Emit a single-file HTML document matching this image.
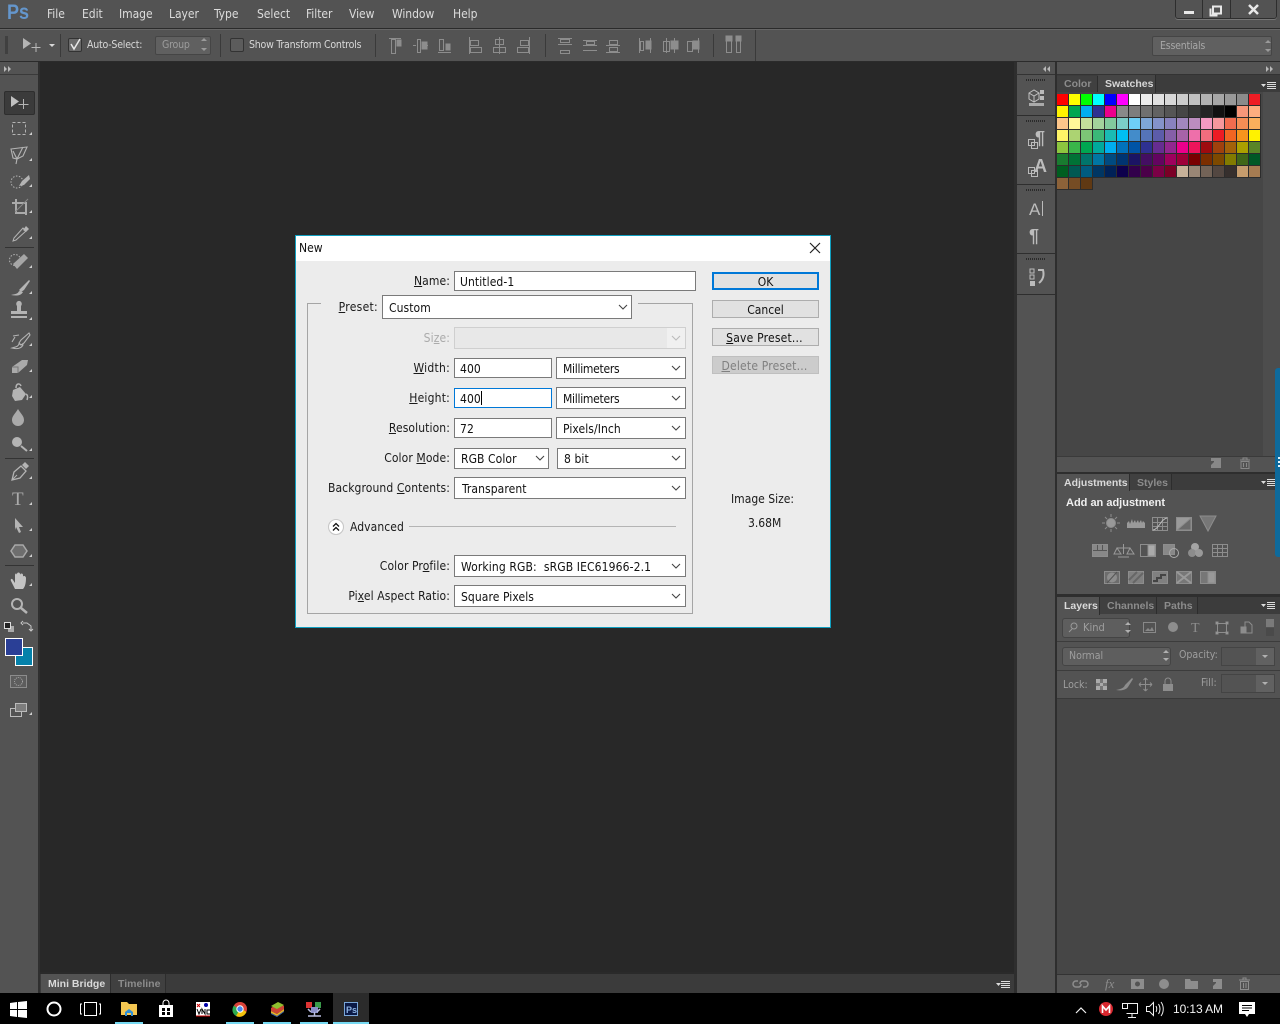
<!DOCTYPE html>
<html><head><meta charset="utf-8"><title>Photoshop - New</title>
<style>
html,body{margin:0;padding:0;width:1280px;height:1024px;overflow:hidden;background:#282828}
body{position:relative;font-family:"DejaVu Sans Condensed","Liberation Sans",sans-serif;font-size:12px}
div,span.t{position:absolute;box-sizing:border-box}
.t{white-space:nowrap;line-height:14px;height:14px}
.m{color:#dcdcdc;top:7px;font-size:12px;letter-spacing:-.05px}
.o{color:#d8d8d8;font-size:10.5px;letter-spacing:-.22px}
.p{font-family:"Liberation Sans",sans-serif;font-size:10.5px;color:#9c9c9c;font-weight:bold;letter-spacing:0}
.pa{color:#dadada}
.l{color:#1a1a1a;right:830px;letter-spacing:.1px}
.f{background:#fff;border:1px solid #7a7a7a;color:#111;padding-left:5px;line-height:20px;letter-spacing:.08px}
.b{background:#e1e1e1;border:1px solid #adadad;color:#111;text-align:center;left:712px;width:107px;height:18px;line-height:18px}
.mm{letter-spacing:-.28px}
u{text-decoration:underline}
#sw{left:1057px;top:94px;width:204px;display:grid;grid-template-columns:repeat(17,12px);grid-auto-rows:12px;background:#2c2c2c}
#sw i{display:block;width:11px;height:11px;margin:0 1px 1px 0}
#sw2{left:1057px;top:178px;display:grid;grid-template-columns:repeat(3,12px);grid-auto-rows:12px;background:#2c2c2c}
#sw2 i{display:block;width:11px;height:11px;margin:0 1px 1px 0}
svg{position:absolute;left:0;top:0;pointer-events:none}
</style></head><body>

<!-- title + options -->
<div style="left:0;top:0;width:1280px;height:28px;background:#535353"></div>
<div style="left:0;top:28px;width:1280px;height:1px;background:#2b2b2b"></div>
<div style="left:0;top:29px;width:1280px;height:33px;background:#535353;border-top:1px solid #666"></div>
<div style="left:0;top:61px;width:1280px;height:1px;background:#2b2b2b"></div>

<span class="t" style="left:7px;top:2px;height:22px;line-height:22px;font-family:'Liberation Sans',sans-serif;font-size:21px;font-weight:bold;color:#6496cc;transform:scaleX(.86);transform-origin:0 0">Ps</span>
<span class="t m" style="left:47px">File</span>
<span class="t m" style="left:82px">Edit</span>
<span class="t m" style="left:119px">Image</span>
<span class="t m" style="left:169px">Layer</span>
<span class="t m" style="left:214px">Type</span>
<span class="t m" style="left:257px">Select</span>
<span class="t m" style="left:306px">Filter</span>
<span class="t m" style="left:349px">View</span>
<span class="t m" style="left:392px">Window</span>
<span class="t m" style="left:453px">Help</span>

<div style="left:1175px;top:0;width:102px;height:19px;background:#535353;border:1px solid #2e2e2e;border-top:0;border-radius:0 0 3px 3px;box-shadow:0 1px 0 #777"></div>

<div style="left:68px;top:38px;width:14px;height:14px;background:#6a6a6a;border:1px solid #333;border-radius:2px"></div>
<span class="t o" style="left:87px;top:38px">Auto-Select:</span>
<div style="left:155px;top:36px;width:56px;height:19px;background:#606060;border:1px solid #454545;border-radius:2px"></div>
<span class="t o" style="left:162px;top:38px;color:#9c9c9c">Group</span>
<div style="left:230px;top:38px;width:14px;height:14px;background:#5c5c5c;border:1px solid #333;border-radius:2px"></div>
<span class="t o" style="left:249px;top:38px">Show Transform Controls</span>
<div style="left:1152px;top:36px;width:120px;height:20px;background:#606060;border:1px solid #454545;border-radius:2px"></div>
<span class="t o" style="left:1160px;top:39px;color:#a8a8a8">Essentials</span>

<!-- left toolbar -->
<div style="left:0;top:62px;width:38px;height:931px;background:#535353"></div>
<div style="left:38px;top:62px;width:2px;height:931px;background:#2f2f2f"></div>
<div style="left:0;top:74px;width:38px;height:1px;background:#3a3a3a"></div>
<div style="left:4px;top:91px;width:31px;height:24px;background:#3b3b3b;border:1px solid #2e2e2e;border-radius:2px"></div>

<!-- bottom dock -->
<div style="left:40px;top:972px;width:976px;height:21px;background:#3b3b3b;border-top:2px solid #2a2a2a"></div>
<div style="left:41px;top:974px;width:69px;height:19px;background:#535353"></div>
<div style="left:110px;top:974px;width:56px;height:19px;background:#404040;border-left:1px solid #2d2d2d;border-right:1px solid #2d2d2d"></div>
<span class="t p pa" style="left:48px;top:977px">Mini Bridge</span>
<span class="t p" style="left:118px;top:977px;color:#8c8c8c">Timeline</span>

<!-- right dock -->
<div style="left:1016px;top:62px;width:264px;height:931px;background:#535353"></div>
<div style="left:1016px;top:62px;width:1px;height:931px;background:#2e2e2e"></div>
<div style="left:1014px;top:62px;width:2px;height:931px;background:#2e2e2e"></div>
<div style="left:1016px;top:74px;width:264px;height:1px;background:#333"></div>
<div style="left:1055px;top:62px;width:2px;height:931px;background:#2e2e2e"></div>
<div style="left:1017px;top:115px;width:38px;height:1px;background:#2e2e2e"></div>
<div style="left:1017px;top:184px;width:38px;height:1px;background:#2e2e2e"></div>
<div style="left:1017px;top:253px;width:38px;height:1px;background:#2e2e2e"></div>
<div style="left:1017px;top:294px;width:38px;height:1px;background:#2e2e2e"></div>

<!-- swatches panel -->
<div style="left:1057px;top:75px;width:219px;height:381px;background:#464646"></div>
<div style="left:1263px;top:92px;width:17px;height:364px;background:#4d4d4d"></div>
<div style="left:1057px;top:75px;width:223px;height:17px;background:#3c3c3c"></div>
<div style="left:1057px;top:76px;width:41px;height:16px;background:#404040;border-right:1px solid #2d2d2d"></div>
<div style="left:1098px;top:75px;width:58px;height:18px;background:#464646;border-right:1px solid #2d2d2d"></div>
<span class="t p" style="left:1064px;top:77px;color:#8c8c8c">Color</span>
<span class="t p" style="left:1105px;top:77px;color:#d8d8d8">Swatches</span>
<div id="sw"><i style="background:#ff0000"></i><i style="background:#ffff00"></i><i style="background:#00ff00"></i><i style="background:#00ffff"></i><i style="background:#0000ff"></i><i style="background:#ff00ff"></i><i style="background:#ffffff"></i><i style="background:#ebebeb"></i><i style="background:#e1e1e1"></i><i style="background:#d7d7d7"></i><i style="background:#cbcbcb"></i><i style="background:#c0c0c0"></i><i style="background:#b2b2b2"></i><i style="background:#a6a6a6"></i><i style="background:#999999"></i><i style="background:#8b8b8b"></i><i style="background:#ed1c24"></i>
<i style="background:#fff200"></i><i style="background:#00a651"></i><i style="background:#00aeef"></i><i style="background:#2e3192"></i><i style="background:#ec008c"></i><i style="background:#898989"></i><i style="background:#7d7d7d"></i><i style="background:#707070"></i><i style="background:#626262"></i><i style="background:#555555"></i><i style="background:#464646"></i><i style="background:#363636"></i><i style="background:#252525"></i><i style="background:#111111"></i><i style="background:#000000"></i><i style="background:#f7977a"></i><i style="background:#fdad7f"></i>
<i style="background:#fdc68a"></i><i style="background:#fff799"></i><i style="background:#c4df9b"></i><i style="background:#a3d39c"></i><i style="background:#82ca9d"></i><i style="background:#7bcdc8"></i><i style="background:#6ecff6"></i><i style="background:#7ea7d8"></i><i style="background:#8493ca"></i><i style="background:#8882be"></i><i style="background:#a187be"></i><i style="background:#bc8dbf"></i><i style="background:#f49ac2"></i><i style="background:#f6989d"></i><i style="background:#f26c4f"></i><i style="background:#f68e55"></i><i style="background:#fbaf5c"></i>
<i style="background:#fff467"></i><i style="background:#acd372"></i><i style="background:#7cc576"></i><i style="background:#3bb878"></i><i style="background:#1abbb4"></i><i style="background:#00bff3"></i><i style="background:#438cca"></i><i style="background:#5574b9"></i><i style="background:#5c5caa"></i><i style="background:#855fa8"></i><i style="background:#a763a8"></i><i style="background:#ee6faa"></i><i style="background:#f26d7e"></i><i style="background:#ed1c24"></i><i style="background:#f26522"></i><i style="background:#f7941d"></i><i style="background:#fff200"></i>
<i style="background:#8dc63f"></i><i style="background:#39b54a"></i><i style="background:#00a651"></i><i style="background:#00a99d"></i><i style="background:#00aeef"></i><i style="background:#0072bc"></i><i style="background:#0054a6"></i><i style="background:#2e3192"></i><i style="background:#662d91"></i><i style="background:#92278f"></i><i style="background:#ec008c"></i><i style="background:#ed145b"></i><i style="background:#9e0b0f"></i><i style="background:#a0410d"></i><i style="background:#a36209"></i><i style="background:#aba000"></i><i style="background:#598527"></i>
<i style="background:#197b30"></i><i style="background:#007236"></i><i style="background:#00746b"></i><i style="background:#0076a3"></i><i style="background:#004a80"></i><i style="background:#003471"></i><i style="background:#1b1464"></i><i style="background:#440e62"></i><i style="background:#630460"></i><i style="background:#9e005d"></i><i style="background:#9e0039"></i><i style="background:#790000"></i><i style="background:#7b2e00"></i><i style="background:#7d4900"></i><i style="background:#827b00"></i><i style="background:#406618"></i><i style="background:#005826"></i>
<i style="background:#005e20"></i><i style="background:#005952"></i><i style="background:#005b7f"></i><i style="background:#003663"></i><i style="background:#002157"></i><i style="background:#0d004c"></i><i style="background:#32004b"></i><i style="background:#4b0049"></i><i style="background:#7b0046"></i><i style="background:#7a0026"></i><i style="background:#c7b299"></i><i style="background:#998675"></i><i style="background:#736357"></i><i style="background:#534741"></i><i style="background:#362f2d"></i><i style="background:#c69c6d"></i><i style="background:#a67c52"></i></div>
<div id="sw2"><i style="background:#8c6239"></i><i style="background:#754c24"></i><i style="background:#603913"></i></div>

<div style="left:1057px;top:456px;width:223px;height:16px;background:#535353;border-top:1px solid #3a3a3a"></div>
<div style="left:1275px;top:368px;width:5px;height:189px;background:#0e6a9c;border-radius:3px 0 0 3px;z-index:2"></div>
<div style="left:1278px;top:457px;width:2px;height:2px;background:#e8f4fa;z-index:3"></div>
<div style="left:1278px;top:461px;width:2px;height:2px;background:#e8f4fa;z-index:3"></div>
<div style="left:1278px;top:465px;width:2px;height:2px;background:#e8f4fa;z-index:3"></div>

<!-- adjustments -->
<div style="left:1057px;top:472px;width:218px;height:2px;background:#2e2e2e"></div>
<div style="left:1057px;top:474px;width:218px;height:16px;background:#3c3c3c"></div>
<div style="left:1057px;top:474px;width:73px;height:17px;background:#535353;border-right:1px solid #2d2d2d"></div>
<div style="left:1130px;top:474px;width:42px;height:16px;background:#404040;border-right:1px solid #2d2d2d"></div>
<span class="t p pa" style="left:1064px;top:476px">Adjustments</span>
<span class="t p" style="left:1137px;top:476px;color:#8c8c8c">Styles</span>
<span class="t" style="left:1066px;top:496px;font-family:'Liberation Sans',sans-serif;font-size:11px;font-weight:bold;color:#f0f0f0">Add an adjustment</span>
<div style="left:1057px;top:594px;width:223px;height:3px;background:#2e2e2e"></div>

<!-- layers -->
<div style="left:1057px;top:597px;width:223px;height:17px;background:#3c3c3c"></div>
<div style="left:1057px;top:597px;width:43px;height:18px;background:#535353;border-right:1px solid #2d2d2d"></div>
<div style="left:1100px;top:597px;width:57px;height:17px;background:#404040;border-right:1px solid #2d2d2d"></div>
<div style="left:1157px;top:597px;width:41px;height:17px;background:#404040;border-right:1px solid #2d2d2d"></div>
<span class="t p pa" style="left:1064px;top:599px">Layers</span>
<span class="t p" style="left:1107px;top:599px;color:#8c8c8c">Channels</span>
<span class="t p" style="left:1164px;top:599px;color:#8c8c8c">Paths</span>
<div style="left:1057px;top:641px;width:223px;height:1px;background:#3c3c3c"></div>
<div style="left:1057px;top:670px;width:223px;height:1px;background:#3c3c3c"></div>
<div style="left:1057px;top:698px;width:223px;height:276px;background:#464646;border-top:1px solid #3a3a3a"></div>
<div style="left:1057px;top:974px;width:223px;height:19px;background:#535353;border-top:1px solid #333"></div>
<div style="left:1062px;top:618px;width:68px;height:20px;background:#5e5e5e;border:1px solid #444;border-radius:3px"></div>
<span class="t" style="left:1083px;top:621px;font-size:11px;color:#9e9e9e">Kind</span>
<div style="left:1062px;top:647px;width:109px;height:19px;background:#5e5e5e;border:1px solid #444;border-radius:3px"></div>
<span class="t" style="left:1069px;top:649px;font-size:10.5px;color:#9e9e9e">Normal</span>
<span class="t" style="left:1179px;top:648px;font-size:10.5px;color:#9e9e9e">Opacity:</span>
<div style="left:1221px;top:647px;width:54px;height:19px;background:#535353;border:1px solid #444"></div>
<div style="left:1256px;top:648px;width:18px;height:17px;background:#616161"></div>
<span class="t" style="left:1063px;top:678px;font-size:10.5px;color:#9e9e9e">Lock:</span>
<span class="t" style="left:1201px;top:676px;font-size:10.5px;color:#9e9e9e">Fill:</span>
<div style="left:1221px;top:674px;width:54px;height:19px;background:#535353;border:1px solid #444"></div>
<div style="left:1256px;top:675px;width:18px;height:17px;background:#616161"></div>

<!-- taskbar -->
<div style="left:0;top:993px;width:1280px;height:31px;background:#000"></div>
<div style="left:333px;top:993px;width:36px;height:31px;background:#2b2b2b"></div>
<div style="left:115px;top:1022px;width:28px;height:2px;background:#76d9f2"></div>
<div style="left:226px;top:1022px;width:28px;height:2px;background:#76d9f2"></div>
<div style="left:263px;top:1022px;width:28px;height:2px;background:#76d9f2"></div>
<div style="left:300px;top:1022px;width:28px;height:2px;background:#76d9f2"></div>
<div style="left:333px;top:1022px;width:36px;height:2px;background:#76d9f2"></div>
<span class="t" style="left:1173px;top:1002px;font-family:'Liberation Sans',sans-serif;font-size:12px;letter-spacing:-.1px;color:#f4f4f4">10:13 AM</span>

<!-- dialog -->
<div style="left:295px;top:235px;width:536px;height:393px;background:#ececec;border:1px solid #0f9fc0"></div>
<div style="left:296px;top:236px;width:534px;height:25px;background:#fff"></div>
<span class="t" style="left:299px;top:241px;color:#111">New</span>

<!-- group box -->
<div style="left:307px;top:303px;width:1px;height:310px;background:#a5a5a5"></div>
<div style="left:307px;top:303px;width:14px;height:1px;background:#a5a5a5"></div>
<div style="left:638px;top:303px;width:55px;height:1px;background:#a5a5a5"></div>
<div style="left:692px;top:303px;width:1px;height:311px;background:#a5a5a5"></div>
<div style="left:307px;top:613px;width:386px;height:1px;background:#a5a5a5"></div>

<span class="t l" style="top:274px"><u>N</u>ame:</span>
<div class="f" style="left:454px;top:271px;width:242px;height:20px">Untitled-1</div>
<span class="t l" style="top:300px;right:902px;letter-spacing:.3px"><u>P</u>reset:</span>
<div class="f" style="left:382px;top:295px;width:250px;height:24px;padding-left:6px;line-height:24px">Custom</div>
<span class="t l" style="top:331px;color:#ababab">Si<u>z</u>e:</span>
<div style="left:454px;top:327px;width:232px;height:22px;background:#f0f0f0;border:1px solid #cfcfcf"></div>
<div style="left:455px;top:328px;width:212px;height:20px;background:#e8e8e8"></div>

<span class="t l" style="top:361px;letter-spacing:.25px"><u>W</u>idth:</span>
<div class="f" style="left:454px;top:358px;width:98px;height:20px">400</div>
<div class="f mm" style="left:556px;top:357px;width:130px;height:22px;padding-left:6px;line-height:22px">Millimeters</div>
<span class="t l" style="top:391px;letter-spacing:.2px"><u>H</u>eight:</span>
<div class="f" style="left:454px;top:388px;width:98px;height:20px;border-color:#0078d7">400</div>
<div style="left:481px;top:391px;width:1px;height:14px;background:#000"></div>
<div class="f mm" style="left:556px;top:387px;width:130px;height:22px;padding-left:6px;line-height:22px">Millimeters</div>
<span class="t l" style="top:421px"><u>R</u>esolution:</span>
<div class="f" style="left:454px;top:418px;width:98px;height:20px">72</div>
<div class="f" style="left:556px;top:417px;width:130px;height:22px;padding-left:6px;line-height:22px">Pixels/Inch</div>
<span class="t l" style="top:451px">Color <u>M</u>ode:</span>
<div class="f" style="left:454px;top:448px;width:95px;height:21px;padding-left:6px;line-height:20px">RGB Color</div>
<div class="f" style="left:557px;top:448px;width:129px;height:21px;padding-left:6px;line-height:20px">8 bit</div>
<span class="t l" style="top:481px">Background <u>C</u>ontents:</span>
<div class="f" style="left:454px;top:477px;width:232px;height:22px;padding-left:7px;line-height:22px">Transparent</div>
<span class="t" style="left:350px;top:520px;color:#1a1a1a;letter-spacing:.08px">Advanced</span>
<div style="left:409px;top:526px;width:267px;height:1px;background:#b4b4b4"></div>
<span class="t l" style="top:559px">Color Pr<u>o</u>file:</span>
<div class="f" style="left:454px;top:555px;width:232px;height:22px;padding-left:6px;line-height:22px;letter-spacing:.12px">Working RGB:&nbsp; sRGB IEC61966-2.1</div>
<span class="t l" style="top:589px">Pi<u>x</u>el Aspect Ratio:</span>
<div class="f" style="left:454px;top:585px;width:232px;height:22px;padding-left:6px;line-height:22px">Square Pixels</div>

<div class="b" style="top:272px;height:18px;border:2px solid #0078d7;line-height:16px">OK</div>
<div class="b" style="top:300px">Cancel</div>
<div class="b" style="top:328px;letter-spacing:.2px;text-indent:-2px"><u>S</u>ave Preset...</div>
<div class="b" style="top:356px;background:#ccc;border-color:#bfbfbf;color:#808080;letter-spacing:.2px;text-indent:-2px"><u>D</u>elete Preset...</div>
<span class="t" style="left:731px;top:492px;color:#1a1a1a">Image Size:</span>
<span class="t" style="left:748px;top:516px;color:#1a1a1a">3.68M</span>

<!-- icon overlay -->
<svg width="1280" height="1024" viewBox="0 0 1280 1024" fill="none" style="z-index:5">
<!-- window buttons -->
<path d="M1202.5 0v19M1230.5 0v19" stroke="#2e2e2e"/>
<rect x="1184" y="11" width="10" height="3" fill="#e8e8e8"/>
<path d="M1213 6.500h8v7h-8zM1210.500 8.500v7h7" stroke="#e8e8e8" stroke-width="2"/>
<path d="M1249 5l9 9M1258 5l-9 9" stroke="#e8e8e8" stroke-width="2.500"/>
<!-- option bar -->
<path d="M5 37h3M5 39h3M5 41h3M5 43h3M5 45h3M5 47h3M5 49h3M5 51h3M5 53h3" stroke="#2e2e2e"/>
<path d="M23 38v11l8-5.500z" fill="#b4b4b4"/>
<path d="M36 43v9M31.500 47.500h9" stroke="#b8b8b8"/>
<path d="M49 44h6l-3 3z" fill="#d8d8d8"/>
<path d="M60.5 34v23M220.5 34v23M375.5 34v23M545.500 34v23M713.500 34v23M755.500 30v31" stroke="#3a3a3a"/>
<path d="M71 44l3 5 6-10" stroke="#e8e8e8" stroke-width="1.500"/>
<path d="M201 41l3-3 3 3zM201 48l3 3 3-3zM1265 43l3-3 3 3zM1265 49l3 3 3-3z" fill="#9a9a9a"/>
<g stroke="#8d8d8d">
<path d="M389 38.500h12M391.500 39.500h4v14h-4z"/><rect x="397" y="40" width="4" height="6" fill="#8d8d8d"/>
<path d="M413 45.500h3M427 45.500h1M417.500 39.500h3v13h-3z"/><rect x="422" y="42" width="5" height="7" fill="#8d8d8d"/>
<path d="M438 52.500h13M439.500 39.500h4v11h-4z"/><rect x="446" y="44" width="4" height="6" fill="#8d8d8d"/>
<path d="M469.500 37v17M470.500 40.500h8v5h-8zM470.500 47.500h11v5h-11z"/>
<path d="M499.500 37v17M495.500 39.500h8v5h-8zM493.500 47.500h12v5h-12z"/>
<path d="M529.500 37v17M520.500 40.500h8v5h-8zM517.500 47.500h11v5h-11z"/>
<path d="M558 38.500h14M558 44.500h14M560.500 39.500h9v3h-9zM560.500 50.500h9v3h-9z"/>
<path d="M583 40.500h14M583 45.500h14M583 50.500h14M586.500 41.500h8v3h-8z"/>
<path d="M606 45.500h14M606 52.500h14M609.500 40.500h8v4h-8zM609.500 47.500h8v4h-8z"/>
<path d="M639.500 38v15M650.500 38v15M640.500 41.500h3v9h-3z"/><rect x="646" y="41" width="5" height="8" fill="#8d8d8d"/>
<path d="M666.500 38v15M674.500 38v15M663.500 41.500h6v10h-6z"/><rect x="671" y="41" width="7" height="8" fill="#8d8d8d"/>
<path d="M698.500 38v15M687.500 41.500h5v10h-5z"/><rect x="693" y="41" width="6" height="8" fill="#8d8d8d"/>
<path d="M726.500 45.500h5v12h-5zM736.500 45.500h4v12h-4z" transform="translate(0 -5)"/>
<rect x="726" y="36" width="6" height="5" fill="#8d8d8d"/><rect x="736" y="36" width="5" height="5" fill="#8d8d8d"/>
</g>
<!-- dock arrows -->
<path d="M4 66l3 3-3 3zM8 66l3 3-3 3zM1266 66l3 3-3 3zM1270 66l3 3-3 3zM1046 66l-3 3 3 3zM1050 66l-3 3 3 3z" fill="#b8b8b8"/>
<!-- tools -->
<path d="M11 96v11l8-5.500z" fill="#c0c0c0"/>
<path d="M23.500 99v10M18.500 104.500h10" stroke="#b4b4b4"/>
<path d="M29 135h3v-3zM29 161h3v-3zM29 187h3v-3zM29 213h3v-3zM29 239h3v-3zM29 268h3v-3zM29 294h3v-3zM29 320h3v-3zM29 346h3v-3zM29 372h3v-3zM29 398h3v-3zM29 451h3v-3zM29 479h3v-3zM29 505h3v-3zM29 531h3v-3zM29 557h3v-3zM29 586h3v-3zM29 715h3v-3z" fill="#d0d0d0"/>
<path d="M5 247.500h29M5 458.500h29M5 565.500h29" stroke="#333"/>
<rect x="12.500" y="122.500" width="13" height="12" stroke="#b4b4b4" stroke-dasharray="3 2"/>
<path d="M11 149l16-2-4 9-6 3-4-1zM13 151l4 8 6-12M17 159l-1 5" stroke="#b4b4b4" stroke-width="1.100"/>
<circle cx="17" cy="182" r="6" stroke="#b4b4b4" stroke-dasharray="1.500 1.500"/>
<path d="M29 175l-7 6-3 5 5-1 6-6z" fill="#b4b4b4"/>
<path d="M16 199v14h11M12 203h14v12" stroke="#aaa" stroke-width="2"/><path d="M28 199l-13 13" stroke="#888"/>
<path d="M14 238l9-10 3 3-10 9-3 1z" stroke="#b4b4b4"/><path d="M23 230l3-4 3 3-3 3z" fill="#b4b4b4"/>
<circle cx="15" cy="260" r="5.500" stroke="#b4b4b4" stroke-dasharray="1.500 1.500"/>
<path d="M13 264l11-10 4 4-11 11z" fill="#a6a6a6"/>
<path d="M29 280l-8 8-2 2 2 2 3-2 6-9zM19 291c-1 3-4 3-8 4 5 1 10 1 12-3z" fill="#b4b4b4"/>
<path d="M17 306a2.800 3 0 1 1 4 0v5h6v3H11v-3h6zM11 316h16v2H11z" fill="#b4b4b4"/>
<path d="M29 333l-8 7-2 3 2 2 3-2 6-8zM19 344c-1 3-4 3-7 4 4 1 9 1 11-3zM13 336l6-1M12 342l3-5" stroke="#b4b4b4" stroke-width="1.100"/>
<path d="M12 367l10-7h6l-1 5-9 8h-6z" fill="#aaa"/><path d="M12 367h6v6" stroke="#777"/>
<path d="M13 390l7-3 6 7-4 6-7 1-3-5z" fill="#b4b4b4"/><path d="M16 388c0-5 4-5 5-2M26 394c2 1 2 3 1 6" stroke="#b4b4b4" stroke-width="1.500"/>
<path d="M18 409c3 5 6 7 6 11a6 6 0 0 1-12 0c0-4 3-6 6-11z" fill="#aaa"/>
<circle cx="17" cy="442" r="5" fill="#b4b4b4"/><path d="M21 446l6 5" stroke="#b4b4b4" stroke-width="2"/>
<path d="M12 480l2-8 7-6 5 5-6 7z" stroke="#b4b4b4" stroke-width="1.300"/><path d="M22 465l3-3 4 4-3 3z" fill="#b4b4b4"/><path d="M12 480l5-5" stroke="#b4b4b4"/>
<text x="12" y="505" font-family="Liberation Serif,serif" font-size="19" fill="#aaa">T</text>
<path d="M15 518l8 9-4 0 2 5-2 1-3-6-1 3z" fill="#b4b4b4"/>
<path d="M15 545h8l4 6-4 6h-8l-4-6z" fill="#6e6e6e" stroke="#a8a8a8" stroke-width="1.500"/>
<path d="M15 589l-4-8c-1-2 1-3 2-1l2 3v-8c0-2 2-2 2 0v-1c0-2 3-2 3 0v1c0-2 3-2 3 0v2c0-2 3-1 3 1 0 5-1 9-3 11z" fill="#c4c4c4"/>
<circle cx="17" cy="604" r="5" stroke="#b4b4b4" stroke-width="2"/><path d="M21 608l6 5" stroke="#b4b4b4" stroke-width="2.500"/>
<rect x="8" y="626" width="6" height="6" fill="#aaa"/><rect x="4.500" y="622.500" width="6" height="6" fill="#222" stroke="#ddd"/>
<path d="M23 623h4l4 3v5M23 621l-2 2 2 2M29 629l2 2 2-2" stroke="#c8c8c8"/>
<rect x="15.500" y="647.500" width="17" height="18" fill="#0581aa" stroke="#fff"/>
<rect x="5.500" y="638.500" width="17" height="17" fill="#2a3f96" stroke="#fff"/>
<rect x="10.500" y="675.500" width="16" height="12" stroke="#8c8c8c" fill="#5d5d5d"/>
<circle cx="18.500" cy="681.500" r="4" stroke="#a8a8a8" stroke-dasharray="1 1"/>
<rect x="10.500" y="708.500" width="11" height="8" stroke="#bbb"/><rect x="15.500" y="703.500" width="11" height="8" fill="#7d7d7d" stroke="#bbb"/>
<!-- right dock icons -->
<path d="M1026 80h20M1026 121h20M1026 190h20M1026 259h20" stroke="#2a2a2a" stroke-width="2" stroke-dasharray="1 1"/>
<path d="M1029 93l5-3 5 3v6l-5 3-5-3zM1029 93l5 3 5-3M1034 96v6" stroke="#c0c0c0"/>
<rect x="1040" y="90" width="4" height="4" fill="#bbb"/><rect x="1040" y="96" width="4" height="4" fill="#bbb"/><rect x="1029" y="103" width="15" height="3" fill="#aaa"/>
<rect x="1028.500" y="139.500" width="6" height="6" stroke="#bbb"/><rect x="1031.500" y="142.500" width="6" height="6" stroke="#bbb"/>
<rect x="1028.500" y="167.500" width="6" height="6" stroke="#bbb"/><rect x="1031.500" y="170.500" width="6" height="6" stroke="#bbb"/>
<path d="M1042.500 201v15" stroke="#bbb"/>
<rect x="1030" y="269" width="4" height="4" stroke="#bbb"/><rect x="1030" y="275" width="4" height="4" stroke="#bbb"/><rect x="1030" y="281" width="5" height="5" fill="#bbb"/>
<path d="M1038 270h5c1 4 1 9-4 13" stroke="#bbb" stroke-width="2"/>
<g fill="#bcbcbc" font-family="Liberation Sans,sans-serif" font-weight="bold">
<text x="1035" y="144" font-size="18">¶</text>
<text x="1034" y="172" font-size="18" font-weight="bold">A</text>
<text x="1029" y="215" font-size="17" font-weight="normal">A</text>
<text x="1029" y="242" font-size="18">¶</text>
</g>
<!-- panel menus -->
<g stroke="#dcdcdc">
<path d="M1267 82.500h9M1267 84.500h9M1267 86.500h9M1267 88.500h9" stroke-width="1"/>
<path d="M1267 479.500h8M1267 481.500h8M1267 483.500h8M1267 485.500h8"/>
<path d="M1267 602.500h8M1267 604.500h8M1267 606.500h8M1267 608.500h8"/>
<path d="M1001 981.500h9M1001 983.500h9M1001 985.500h9M1001 987.500h9"/>
</g>
<path d="M1261 84h5l-2.500 3zM1261 481h5l-2.500 3zM1261 604h5l-2.500 3zM996 983h5l-2.500 3z" fill="#dcdcdc"/>
<!-- swatch foot -->
<path d="M1211 458h10v10h-10v-3l3-3v-1h-3z" fill="#888"/>
<path d="M1240 460h10M1241 461.500h8v7h-8zM1243.500 463v4M1246.500 463v4M1243 460v-2h4v2" stroke="#888"/>
<!-- adjustment icons -->
<g stroke="#8d8d8d" fill="none">
<circle cx="1111" cy="523" r="4.500" fill="#999"/><path d="M1111 514v3M1111 529v3M1102 523h3M1117 523h3M1105 517l2 2M1115 527l2 2M1105 529l2-2M1115 519l2-2"/>
<path d="M1127 528v-5l2-2 1 3 2-5 1 4 2-3 1 3 2-3 1 3 2-3 1 3 1-2 2 2v5z" fill="#9a9a9a" stroke="none"/>
<rect x="1152.500" y="517.500" width="15" height="13"/><path d="M1152 522.500h16M1152 526.500h16M1157.500 517v14M1162.500 517v14"/><path d="M1153 530c6-1 8-11 14-12" stroke="#bbb"/>
<rect x="1176.500" y="517.500" width="15" height="13" fill="#9a9a9a"/><path d="M1177 530l14-12v12z" fill="#6a6a6a"/>
<path d="M1200 516h16l-8 15z" fill="#777" stroke="#8d8d8d"/>
<rect x="1092.500" y="544.500" width="15" height="12" fill="#888"/><path d="M1093 550.500h14M1097.500 545v5M1102.500 545v5" stroke="#555"/>
<path d="M1123.500 544v10M1117 548h13M1117 548l-3 6h7zM1130 548l-3 6h7zM1118 557h11" stroke="#999"/>
<rect x="1140.500" y="544.500" width="15" height="12"/><rect x="1148" y="545" width="7" height="11" fill="#aaa"/>
<rect x="1163.500" y="544.500" width="11" height="10" fill="#888"/><circle cx="1174" cy="553" r="4.500" stroke="#aaa"/>
<circle cx="1195" cy="547" r="4" fill="#a4a4a4" stroke="none"/><circle cx="1192" cy="553" r="4" fill="#8c8c8c" stroke="none"/><circle cx="1199" cy="553" r="4" fill="#999" stroke="none"/>
<rect x="1212.500" y="544.500" width="15" height="12"/><path d="M1212 548.500h16M1212 552.500h16M1217.500 544v13M1222.500 544v13"/>
<rect x="1104.500" y="571.500" width="15" height="12" fill="#6d6d6d"/><circle cx="1112" cy="577.500" r="4.500" fill="#8d8d8d"/><path d="M1107 583l10-11" stroke="#555"/>
<rect x="1128.500" y="571.500" width="15" height="12" fill="#808080"/><path d="M1129 580l8-8M1133 583l10-10" stroke="#666" stroke-width="2"/>
<rect x="1152.500" y="571.500" width="15" height="12" fill="#808080"/><path d="M1153 581h4v-3h4v-3h5" stroke="#444" stroke-width="2"/>
<rect x="1176.500" y="571.500" width="15" height="12" fill="#777"/><path d="M1177 572l14 11M1191 572l-14 11" stroke="#999" stroke-width="2"/>
<rect x="1200.500" y="571.500" width="15" height="12" fill="#777"/><rect x="1208" y="572" width="7" height="11" fill="#999"/>
<!-- layers row -->
<circle cx="1074" cy="626" r="3" stroke="#9a9a9a"/><path d="M1072 629l-3 3" stroke="#9a9a9a"/>
<rect x="1143.500" y="622.500" width="12" height="10" stroke="#888"/><path d="M1145 631l3-3 2 2 2-3 2 4z" fill="#888" stroke="none"/>
<circle cx="1173" cy="627" r="5" fill="#8d8d8d" stroke="none"/>
<rect x="1217.500" y="623.500" width="9" height="9"/><rect x="1216" y="622" width="2" height="2" fill="#aaa"/><rect x="1226" y="622" width="2" height="2" fill="#aaa"/><rect x="1216" y="632" width="2" height="2" fill="#aaa"/><rect x="1226" y="632" width="2" height="2" fill="#aaa"/>
<path d="M1245 622h4l3 3v8h-7z"/><rect x="1241" y="627" width="5" height="6" fill="#8d8d8d"/>
<rect x="1266" y="619" width="8" height="8" fill="#7a7a7a" stroke="none"/><rect x="1266" y="628" width="8" height="8" fill="#4a4a4a" stroke="none"/>
<!-- lock row -->
<rect x="1096" y="679" width="11" height="11" fill="#777" stroke="none"/><path d="M1096 679h4v4h-4zM1103 679h4v4h-4zM1100 683h3v3h-3zM1096 686h4v4h-4zM1103 686h4v4h-4z" fill="#aaa" stroke="none"/>
<path d="M1132 678l-7 7c-1 3-4 4-9 5 5 1 10 0 12-3l5-8z" fill="#8d8d8d" stroke="none"/>
<path d="M1145.500 678v13M1139 684.500h13M1145.500 678l-2 2M1145.500 678l2 2M1145.500 691l-2-2M1145.500 691l2-2M1139 684.500l2-2M1139 684.500l2 2M1152 684.500l-2-2M1152 684.500l-2 2"/>
<rect x="1163" y="684" width="10" height="7" fill="#8d8d8d" stroke="none"/><path d="M1165 684v-3a3 3 0 0 1 6 0v3"/>
<!-- layers foot -->
<path d="M1079 983h-2a3 3 0 0 0 0 6h3a3 3 0 0 0 2-3M1084 989h2a3 3 0 0 0 0-6h-3a3 3 0 0 0-2 3" transform="translate(-1 -2)" stroke-width="1.500"/>
<rect x="1131" y="979" width="13" height="10" fill="#8d8d8d" stroke="none"/><circle cx="1137.500" cy="984" r="2.500" fill="#535353" stroke="none"/>
<circle cx="1164" cy="984" r="5" fill="#8d8d8d" stroke="none"/>
<path d="M1185 979h5l1 2h7v8h-13z" fill="#8d8d8d" stroke="none"/>
<path d="M1213 979h9v10h-9v-3l3-3v-1h-3z" fill="#8d8d8d" stroke="none"/>
<path d="M1239 980h11M1240.500 981.500h8v8h-8zM1243.500 983v5M1246 983v5M1243 980v-2h3v2"/>
</g>
<text x="1105" y="988" font-family="Liberation Serif,serif" font-style="italic" font-size="13" fill="#8d8d8d">fx</text>
<text x="1191" y="632" font-family="Liberation Serif,serif" font-size="14" fill="#8d8d8d">T</text>
<path d="M1125 625l3-3 3 3zM1125 630l3 3 3-3zM1163 653l3-3 3 3zM1163 658l3 3 3-3zM1262 655h6l-3 3zM1262 682h6l-3 3z" fill="#b0b0b0"/>
<!-- dialog chevrons -->
<g stroke="#444" stroke-width="1.100">
<path d="M619 305l4 4 4-4M672 366l4 4 4-4M672 396l4 4 4-4M672 426l4 4 4-4M536 456l4 4 4-4M672 456l4 4 4-4M672 486l4 4 4-4M672 564l4 4 4-4M672 594l4 4 4-4"/>
<path d="M672 336l4 4 4-4" stroke="#bbb"/>
<path d="M810 243l10 10M820 243l-10 10" stroke="#222" stroke-width="1.200"/>
<circle cx="336" cy="527" r="7.500" fill="#fff" stroke="#c8c8c8"/>
<path d="M333 526.500l3-3 3 3M333 530.500l3-3 3 3" stroke="#111" stroke-width="1.300"/>
</g>
<!-- taskbar icons -->
<path d="M10 1003l7-1v7h-7zM18 1002l9-1v8h-9zM10 1010h7v7l-7-1zM18 1010h9v8l-9-1z" fill="#fff"/>
<circle cx="54" cy="1009" r="6.500" stroke="#fff" stroke-width="2"/>
<path d="M84.500 1002.500h12v13h-12zM82 1004h-1.500v10H82M99 1004h1.500v10H99" stroke="#fff"/>
<path d="M121 1002h6l2 2h8v11h-16z" fill="#f3c651"/><path d="M125 1016v-4l4-3 4 3v4h-2v-3h-4v3z" fill="#2f8fd6"/>
<path d="M159 1005h14v12h-14z" fill="#fff"/><path d="M163 1005v-2a3 3 0 0 1 6 0v2" stroke="#fff"/><path d="M162 1008h3v3h-3zM167 1008h3v3h-3zM162 1012h3v3h-3zM167 1012h3v3h-3z" fill="#000"/>
<rect x="196" y="1002" width="14" height="14" fill="#fff"/><path d="M197 1004l3 3M200 1004l-3 3" stroke="#c00"/><circle cx="206" cy="1005" r="2" fill="#00a"/><path d="M197 1009l2 5 2-5M202 1014v-5l3 5v-5M210 1010h-3v4h3" stroke="#000"/><path d="M196 1016h14" stroke="#c00"/>
<circle cx="240" cy="1009" r="7" fill="#d8423a"/><path d="M240 1009l6 3.500a7 7 0 0 1-10 3.500l2-7z" fill="#f4c20d"/><path d="M234 1005.500a7 7 0 0 0 2 10.500l3.500-6z" fill="#2da94f"/><path d="M240 1002a7 7 0 0 1 6.500 4.500H240z" fill="#d8423a"/><path d="M246.500 1012a7 7 0 0 1-6 4l3-6z" fill="#f4c20d"/><circle cx="240" cy="1009" r="3.200" fill="#4688f1" stroke="#fff"/>
<path d="M271 1008l7-5 6 3v3l-7 5-6-3z" fill="#c43"/><path d="M271 1006l7-4 6 3-7 4z" fill="#8fbf2f"/><path d="M271 1011l6 3 7-5v2l-7 5-6-3z" fill="#e3b22a"/><path d="M271 1013l6 3 7-5v1l-7 5-6-3z" fill="#3a67b0"/>
<rect x="306" y="1002" width="6" height="6" fill="#d33"/><rect x="315" y="1002" width="6" height="6" fill="#3a9a4a"/><rect x="311" y="1007" width="7" height="6" fill="#8a8fc8"/><path d="M308 1016h13M314.500 1012v4M308 1009l3 3M320 1009l-3 3" stroke="#b9bde0" stroke-width="1.500"/>
<rect x="344.500" y="1002.500" width="13" height="13" fill="#0b1a46" stroke="#7aa7d8"/>
<text x="346" y="1013" font-family="Liberation Sans,sans-serif" font-size="9" font-weight="bold" fill="#8db4e2">Ps</text>
<path d="M1076 1013l5-5 5 5" stroke="#f0f0f0" stroke-width="1.200"/>
<circle cx="1106" cy="1009" r="7" fill="#d9272e"/>
<path d="M1102.500 1013v-7l3.500 4 3.500-4v7" stroke="#fff" stroke-width="1.600"/>
<path d="M1126.500 1003.500h11v10h-11M1132 1014v3M1128 1017.500h8M1122.500 1003.500h5v5h-5z" stroke="#f0f0f0"/>
<path d="M1146.500 1006.500h3l4-4v13l-4-4h-3zM1156 1006c1 2 1 4 0 6M1158.500 1004c2 3 2 7 0 10M1161 1002c3 4 3 10 0 14" stroke="#f0f0f0"/>
<path d="M1239 1002h16v12h-6l-2 3-2-3h-6z" fill="#fff"/><path d="M1242 1005.500h10M1242 1008h10M1242 1010.500h7" stroke="#000"/>
</svg>
</body></html>
